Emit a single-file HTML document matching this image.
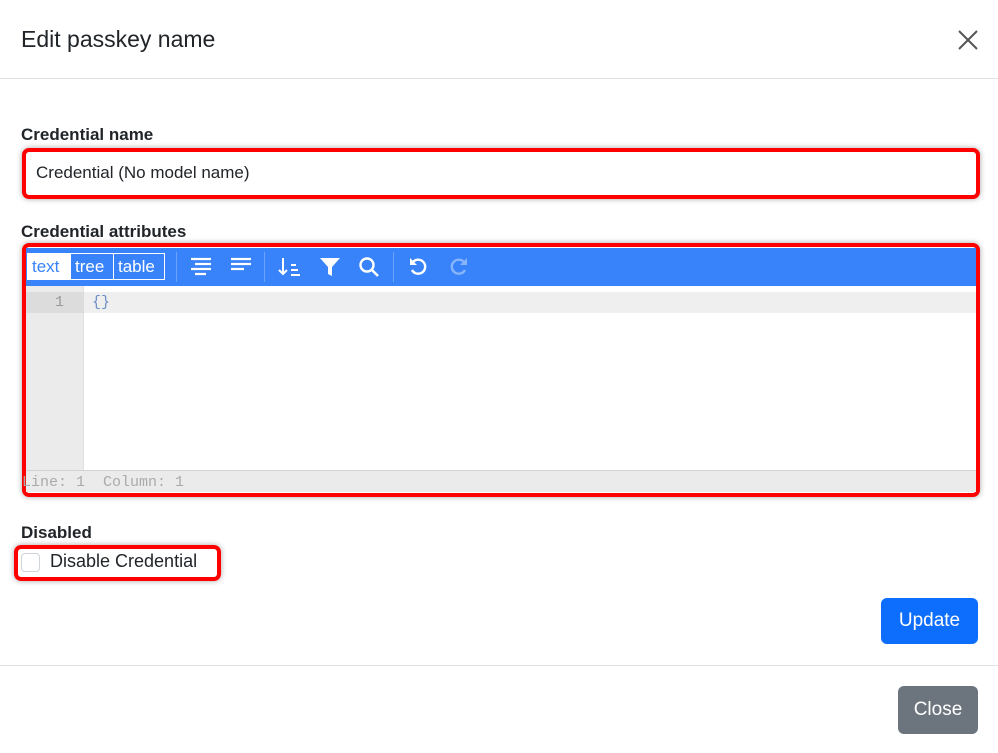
<!DOCTYPE html>
<html><head><style>
*{box-sizing:border-box}
body{margin:0;width:998px;height:753px;background:#fff;font-family:"Liberation Sans",sans-serif;color:#212529;position:relative;overflow:hidden}
.abs{position:absolute}
.red{position:absolute;border:4px solid #f00;border-radius:7px;box-shadow:0 0 6px rgba(0,0,0,.35)}
.lbl{position:absolute;left:21px;font-size:17px;font-weight:bold;color:#212529}
.tb{position:absolute;top:248px;left:26px;width:950px;height:38px;background:#3883fa}
.mode{position:absolute;top:5px;height:27px;border:1px solid #fff;color:#fff;font-size:17px;line-height:25px;padding:0 4px}
</style></head><body>
<div class="abs" style="left:21px;top:26px;font-size:23px">Edit passkey name</div>
<svg class="abs" style="left:957px;top:29px" width="22" height="22"><path d="M2 2L20 20M20 2L2 20" stroke="#555" stroke-width="2"/></svg>
<div class="abs" style="left:0;top:78px;width:998px;height:1px;background:#dee2e6"></div>

<div class="lbl" style="top:125px">Credential name</div>
<div class="red" style="left:22px;top:148px;width:958px;height:51px"></div>
<div class="abs" style="left:36px;top:163px;font-size:17px">Credential (No model name)</div>

<div class="lbl" style="top:222px">Credential attributes</div>
<div class="red" style="left:22px;top:243px;width:958px;height:254px"></div>
<div class="tb">
 <div class="mode" style="left:1px;width:44px;background:#fff;color:#3883fa">text</div>
 <div class="mode" style="left:44px;width:44px">tree</div>
 <div class="mode" style="left:87px;width:52px">table</div>
 <div class="abs" style="left:150px;top:4px;width:1px;height:30px;background:#6aa3fb"></div>
 <svg class="abs" style="left:164px;top:9px" width="22" height="20"><path d="M1 2h20M5 7h16M1 12h20M5 17h11" stroke="#fff" stroke-width="2.2"/></svg>
 <svg class="abs" style="left:204px;top:9px" width="22" height="20"><path d="M1 2h20M1 7h20M1 12h13" stroke="#fff" stroke-width="2.2"/></svg>
 <div class="abs" style="left:238px;top:4px;width:1px;height:30px;background:#6aa3fb"></div>
 <svg class="abs" style="left:252px;top:8px" width="24" height="22"><path d="M5 2v16M1 14l4 4 4-4M13 9h5M13 14h7M13 19h9" stroke="#fff" stroke-width="2" fill="none"/></svg>
 <svg class="abs" style="left:293px;top:9px" width="22" height="20"><path d="M1 1h20l-8 9v9l-4-2v-7z" fill="#fff"/></svg>
 <svg class="abs" style="left:332px;top:8px" width="22" height="22"><circle cx="9" cy="9" r="6.5" stroke="#fff" stroke-width="2.4" fill="none"/><path d="M14 14l6 6" stroke="#fff" stroke-width="2.6"/></svg>
 <div class="abs" style="left:367px;top:4px;width:1px;height:30px;background:#6aa3fb"></div>
 <svg class="abs" style="left:382px;top:8px" width="22" height="22"><path d="M5 6a7 7 0 1 1 -1 8" stroke="#fff" stroke-width="2.4" fill="none"/><path d="M2 2v7h7z" fill="#fff"/></svg>
 <svg class="abs" style="left:421px;top:8px" width="22" height="22"><path d="M17 6a7 7 0 1 0 1 8" stroke="#88b4fb" stroke-width="2.4" fill="none"/><path d="M20 2v7h-7z" fill="#88b4fb"/></svg>
</div>
<div class="abs" style="left:26px;top:286px;width:58px;height:184px;background:#ebebeb;border-right:1px solid #e0e0e0"></div>
<div class="abs" style="left:26px;top:292px;width:950px;height:21px;background:#efefef"></div>
<div class="abs" style="left:26px;top:292px;width:58px;height:21px;background:#dcdcdc"></div>
<div class="abs" style="left:55px;top:294px;font:15px 'Liberation Mono',monospace;color:#999">1</div>
<div class="abs" style="left:92px;top:294px;font:15px 'Liberation Mono',monospace;color:#6d8fc6">{}</div>
<div class="abs" style="left:26px;top:470px;width:950px;height:22px;background:#ebebeb;border-top:1px solid #d3d3d3"></div>
<div class="abs" style="left:22px;top:474px;font:15px 'Liberation Mono',monospace;color:#aaa;white-space:pre">Line: 1  Column: 1</div>

<div class="lbl" style="top:523px">Disabled</div>
<div class="red" style="left:14px;top:545px;width:207px;height:36px"></div>
<div class="abs" style="left:21px;top:553px;width:19px;height:19px;border:1px solid #ced4da;border-radius:4px"></div>
<div class="abs" style="left:50px;top:551px;font-size:18px">Disable Credential</div>

<div class="abs" style="left:881px;top:598px;width:97px;height:46px;background:#0d6efd;border-radius:6px;color:#fff;font-size:19px;text-align:center;line-height:46px">Update</div>
<div class="abs" style="left:0;top:665px;width:998px;height:1px;background:#dee2e6"></div>
<div class="abs" style="left:898px;top:686px;width:80px;height:48px;background:#6c757d;border-radius:6px;color:#fff;font-size:19px;text-align:center;line-height:48px">Close</div>
</body></html>
